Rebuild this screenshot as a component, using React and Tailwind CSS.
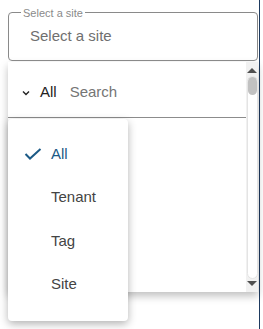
import React from "react";

const items = ["All", "Tenant", "Tag", "Site"];

const Scrollbar = () => (
  <div className="w-3 h-full bg-[#f1f1f1] flex flex-col items-center">
    <svg width="12" height="10" viewBox="0 0 12 10" className="mt-[3px]">
      <polygon points="1,8 6,3 11,8" fill="#505050" />
    </svg>
    <div className="flex-1 w-[11px] mt-px rounded-full bg-white border border-[#e4e4e4] flex flex-col">
      <div className="h-[18px] rounded-full bg-[#c1c1c1]" />
    </div>
    <svg width="12" height="10" viewBox="0 0 12 10" className="mb-[3px]">
      <polygon points="1,2 6,7 11,2" fill="#505050" />
    </svg>
  </div>
);

const SiteMenu = () => (
  <div className="absolute left-2 top-[119px] w-[120px] h-[202px] bg-white rounded-[4px] shadow-[0_3px_8px_rgba(0,0,0,0.3)] pt-[13px]">
    {items.map((item, i) => (
      <div key={item} className="h-[43.5px] flex items-center">
        <div className="w-[35px] flex justify-end pr-px">
          {i === 0 && (
            <svg width="18" height="12" viewBox="0 0 18 12">
              <polyline points="1.5,6 6,10.5 16.5,1" fill="none" stroke="#1c5a86" strokeWidth="2" />
            </svg>
          )}
        </div>
        <span className={`ml-[8px] text-[15px] ${i === 0 ? "text-[#1c5a86]" : "text-[#444444]"}`}>
          {item}
        </span>
      </div>
    ))}
  </div>
);

export default function App() {
  return (
    <div
      className="relative w-[260px] h-[329px] bg-white border-r border-[#1e3a5f]"
      style={{ fontFamily: '"Liberation Sans", Arial, sans-serif' }}
    >
      <div className="pt-3 pl-2 pr-[1px]">
        <div className="relative h-[49px] border border-[#8a8a8a] rounded-[4px] flex items-center pl-[21px]">
          <span className="absolute -top-[7px] left-[12px] bg-white px-[2px] text-[11px] text-[#8a8a8a] leading-[14px]">
            Select a site
          </span>
          <span className="text-[15px] text-[#6f6f6f]">Select a site</span>
        </div>
        <div className="mt-px h-[230px] flex bg-white shadow-[0_4px_8px_rgba(0,0,0,0.25)]">
          <div className="flex-1 flex flex-col">
            <div className="h-[56px] flex items-center border-b border-[#8c8c8c] pt-[6px]">
              <svg width="8" height="6" viewBox="0 0 8 6" className="ml-[14px]">
                <polyline points="1,1.5 4,4.5 7,1.5" fill="none" stroke="#222222" strokeWidth="1.4" />
              </svg>
              <span className="ml-[10px] text-[15px] text-[#222222]">All</span>
              <span className="ml-[13px] text-[15px] text-[#757575]">Search</span>
            </div>
          </div>
          <Scrollbar />
        </div>
      </div>
      <SiteMenu />
    </div>
  );
}
